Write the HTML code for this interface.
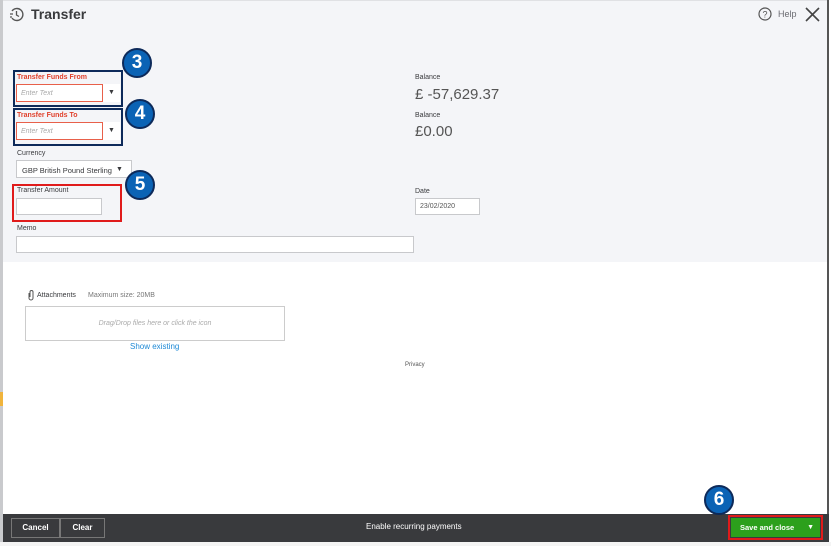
<!DOCTYPE html>
<html><head><style>
*{box-sizing:border-box;margin:0;padding:0}
body{width:831px;height:546px;overflow:hidden;position:relative;background:#fff;font-family:"Liberation Sans",sans-serif;color:#393a3d}
.a{position:absolute}
.lbl{font-size:7px;color:#393a3d}
.red{color:#e0412c;font-weight:bold}
.inp{background:#fff;border:1px solid #c8c9cc}
.circ{width:30px;height:30px;border-radius:50%;background:#0b63b5;border:2px solid #0d2a5a;color:#fff;font-weight:bold;font-size:19px;text-align:center;line-height:26px}
</style></head><body>
<div class="a" style="left:0;top:0;width:3px;height:546px;background:#c9cacd"></div>
<div class="a" style="left:0;top:392px;width:3px;height:14px;background:#f0b43c"></div>
<div class="a" style="left:3px;top:0;width:824px;height:262px;background:#f4f5f8;border-top:1px solid #e0e1e4"></div>
<div class="a" style="left:827px;top:0;width:2px;height:514px;background:#555"></div>
<svg class="a" style="left:9px;top:7px" width="15" height="15" viewBox="0 0 15 15"><path d="M3 4 A6 6 0 1 1 3 11" fill="none" stroke="#555" stroke-width="1.4"/><path d="M7.5 4v4l2.5 1.5" fill="none" stroke="#555" stroke-width="1.3"/><path d="M1 7h3M1 10h2" stroke="#555" stroke-width="1.2"/></svg>
<div class="a" style="left:31px;top:6px;font-size:14px;font-weight:bold;color:#393a3d">Transfer</div>
<svg class="a" style="left:758px;top:7px" width="14" height="14"><circle cx="7" cy="7" r="6" fill="none" stroke="#555" stroke-width="1.2"/><text x="7" y="10.5" font-size="9" text-anchor="middle" fill="#555" font-family="Liberation Sans">?</text></svg>
<div class="a" style="left:778px;top:9px;font-size:9px;color:#6b6c72">Help</div>
<svg class="a" style="left:805px;top:7px" width="15" height="15"><path d="M1 1L14 14M14 1L1 14" stroke="#444" stroke-width="1.6"/></svg>

<div class="a" style="left:13px;top:70px;width:110px;height:37px;border:2px solid #0d2a5a"></div>
<div class="a lbl red" style="left:17px;top:74px">Transfer Funds From</div>
<div class="a inp" style="left:16px;top:84px;width:87px;height:18px;border-color:#e8604a"></div>
<div class="a" style="left:21px;top:90px;font-size:7px;color:#aaa;font-style:italic">Enter Text</div>
<div class="a" style="left:103px;top:84px;width:17px;height:18px;background:#fff;font-size:7px;text-align:center;line-height:18px">▼</div>
<div class="circ a" style="left:122px;top:48px">3</div>

<div class="a" style="left:13px;top:108px;width:110px;height:38px;border:2px solid #0d2a5a"></div>
<div class="a lbl red" style="left:17px;top:112px">Transfer Funds To</div>
<div class="a inp" style="left:16px;top:122px;width:87px;height:18px;border-color:#e8604a"></div>
<div class="a" style="left:21px;top:128px;font-size:7px;color:#aaa;font-style:italic">Enter Text</div>
<div class="a" style="left:103px;top:122px;width:17px;height:18px;background:#fff;font-size:7px;text-align:center;line-height:18px">▼</div>
<div class="circ a" style="left:125px;top:99px">4</div>

<div class="a lbl" style="left:17px;top:150px">Currency</div>
<div class="a inp" style="left:16px;top:160px;width:116px;height:18px;font-size:7.5px;padding:5px 0 0 5px">GBP British Pound Sterling</div>
<div class="a" style="left:116px;top:161px;font-size:7px;line-height:18px">▼</div>
<div class="circ a" style="left:125px;top:170px">5</div>

<div class="a" style="left:12px;top:184px;width:110px;height:38px;border:2px solid #e01b1b"></div>
<div class="a lbl" style="left:17px;top:187px">Transfer Amount</div>
<div class="a inp" style="left:16px;top:198px;width:86px;height:17px"></div>
<div class="a lbl" style="left:17px;top:225px">Memo</div>
<div class="a inp" style="left:16px;top:236px;width:398px;height:17px"></div>

<div class="a lbl" style="left:415px;top:74px">Balance</div>
<div class="a" style="left:415px;top:86px;font-size:15px;color:#555">£ -57,629.37</div>
<div class="a lbl" style="left:415px;top:112px">Balance</div>
<div class="a" style="left:415px;top:123px;font-size:15px;color:#555">£0.00</div>
<div class="a lbl" style="left:415px;top:188px">Date</div>
<div class="a inp" style="left:415px;top:198px;width:65px;height:17px;font-size:7px;padding:4px 0 0 4px;color:#555">23/02/2020</div>

<svg class="a" style="left:27px;top:289px" width="8" height="12"><path d="M2 4v5a2 2 0 0 0 4 0V3a1.5 1.5 0 0 0-3 0v5" fill="none" stroke="#555" stroke-width="1"/></svg>
<div class="a" style="left:37px;top:292px;font-size:7px;color:#393a3d">Attachments</div>
<div class="a" style="left:88px;top:292px;font-size:7px;color:#777">Maximum size: 20MB</div>
<div class="a" style="left:25px;top:306px;width:260px;height:35px;border:1px solid #ccc;text-align:center;font-size:7px;color:#aaa;font-style:italic;line-height:33px">Drag/Drop files here or click the icon</div>
<div class="a" style="left:130px;top:342px;font-size:8px;color:#1f8ad6">Show existing</div>
<div class="a" style="left:405px;top:362px;font-size:6px;color:#555">Privacy</div>

<div class="a" style="left:3px;top:514px;width:826px;height:28px;background:#393a3d"></div>
<div class="a" style="left:0;top:542px;width:831px;height:4px;background:#f4f4f4"></div>
<div class="a" style="left:11px;top:518px;width:49px;height:20px;border:1px solid #777;color:#fff;font-size:8px;font-weight:bold;text-align:center;line-height:18px">Cancel</div>
<div class="a" style="left:60px;top:518px;width:45px;height:20px;border:1px solid #777;color:#fff;font-size:8px;font-weight:bold;text-align:center;line-height:18px">Clear</div>
<div class="a" style="left:366px;top:522px;font-size:8px;color:#fff">Enable recurring payments</div>
<div class="a" style="left:728px;top:515px;width:95px;height:25px;border:2px solid #e01b1b"></div>
<div class="a" style="left:731px;top:518px;width:89px;height:19px;background:#2ca01c;color:#fff;font-size:7.5px;font-weight:bold;line-height:19px;padding-left:9px">Save and close<span style="position:absolute;right:6px;font-size:7px">▼</span></div>
<div class="circ a" style="left:704px;top:485px">6</div>
</body></html>
